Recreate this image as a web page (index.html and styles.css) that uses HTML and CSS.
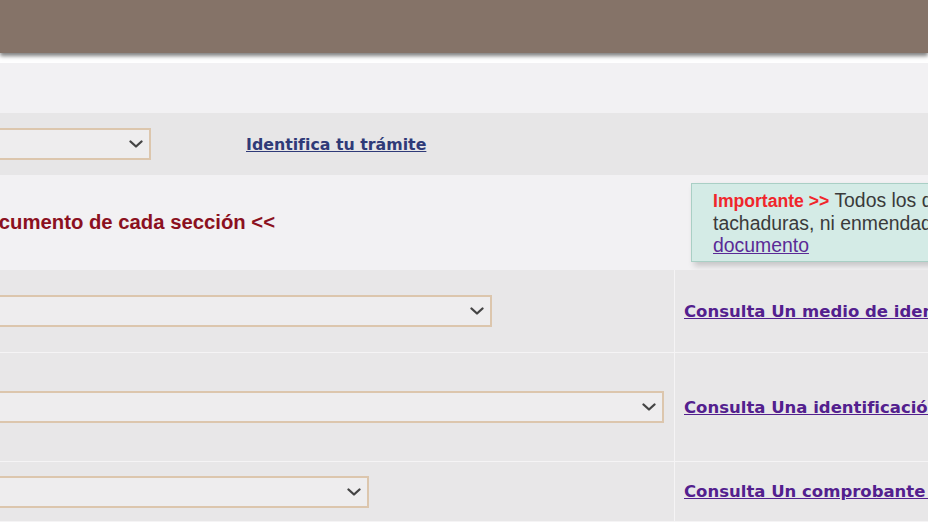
FILE: index.html
```html
<!DOCTYPE html>
<html lang="es">
<head>
<meta charset="utf-8">
<title>Documentos</title>
<link rel="stylesheet" href="styles.css">
</head>
<body>
<header class="topbar"></header>
<div class="strip"></div>
<div class="band"></div>
<div class="row-tramite">
  <span class="selwrap sel-tramite">
    <select class="sel"><option></option></select>
    <svg class="chev" viewBox="0 0 14 8" width="14" height="8"><path d="M1.5 1.5 L7 6.5 L12.5 1.5"/></svg>
  </span>
  <a class="link-tramite" href="#">Identifica tu trámite</a>
</div>
<section class="intro">
  <div class="intro-title"><h2>&gt;&gt; Selecciona un documento de cada sección &lt;&lt;</h2></div>
  <div class="notice">
    <span class="imp">Importante &gt;&gt;</span> Todos los documentos deben ser legibles, sin<br>
    tachaduras, ni enmendaduras. Consulta las características de cada<br>
    <a href="#" class="notice-link">documento</a>
  </div>
</section>
<div class="docs">
  <div class="cell cell-left">
    <span class="selwrap sel-a">
      <select class="sel"><option></option></select>
      <svg class="chev" viewBox="0 0 14 8" width="14" height="8"><path d="M1.5 1.5 L7 6.5 L12.5 1.5"/></svg>
    </span>
  </div>
  <div class="cell cell-right"><a href="#" class="consulta">Consulta Un medio de identificación</a></div>
  <div class="cell cell-left">
    <span class="selwrap sel-b">
      <select class="sel"><option></option></select>
      <svg class="chev" viewBox="0 0 14 8" width="14" height="8"><path d="M1.5 1.5 L7 6.5 L12.5 1.5"/></svg>
    </span>
  </div>
  <div class="cell cell-right"><a href="#" class="consulta">Consulta Una identificación oficial</a></div>
  <div class="cell cell-left">
    <span class="selwrap sel-c">
      <select class="sel"><option></option></select>
      <svg class="chev" viewBox="0 0 14 8" width="14" height="8"><path d="M1.5 1.5 L7 6.5 L12.5 1.5"/></svg>
    </span>
  </div>
  <div class="cell cell-right"><a href="#" class="consulta">Consulta Un comprobante de domicilio</a></div>
  <div class="cell cell-left"></div>
  <div class="cell cell-right"></div>
</div>
</body>
</html>
```
FILE: styles.css
```css
html, body {
  margin: 0;
  padding: 0;
}
body {
  width: 928px;
  height: 522px;
  overflow: hidden;
  background: #f2f1f3;
  font-family: "Liberation Sans", Arial, sans-serif;
}
.topbar {
  position: relative;
  z-index: 2;
  height: 53px;
  background: #857368;
  box-shadow: 0 3px 4px rgba(60, 60, 60, 0.65);
}
.strip {
  height: 10px;
  background: #ffffff;
}
.band {
  height: 50px;
  background: #f2f1f3;
}
.row-tramite {
  height: 62px;
  background: #e7e6e7;
  display: flex;
  align-items: center;
}
.selwrap {
  position: relative;
  display: block;
  flex: 0 0 auto;
  height: 32px;
  margin-left: -40px;
}
.sel {
  display: block;
  width: 100%;
  height: 32px;
  margin: 0;
  border: 2px solid #dcc6ad;
  background-color: #eeedee;
  border-radius: 0;
  box-sizing: border-box;
  appearance: none;
  -webkit-appearance: none;
  color: #333;
  font-size: 14px;
}
.chev {
  position: absolute;
  right: 8px;
  top: 12px;
  pointer-events: none;
}
.chev path {
  fill: none;
  stroke: #444444;
  stroke-width: 2.3;
  stroke-linecap: round;
  stroke-linejoin: round;
}
.sel-tramite { width: 191px; }
.sel-a { width: 532px; }
.sel-b { width: 704px; }
.sel-c { width: 409px; }
.link-tramite {
  margin-left: 95px;
  font-family: "DejaVu Sans", Verdana, sans-serif;
  font-weight: bold;
  font-size: 15.8px;
  color: #2f3a78;
  text-decoration: underline;
}
.intro {
  height: 95px;
  background: #f2f1f3;
  display: flex;
  align-items: center;
}
.intro-title {
  width: 275px;
  flex: 0 0 275px;
  display: flex;
  justify-content: flex-end;
}
.intro-title h2 {
  margin: 0;
  white-space: nowrap;
  font-family: "Liberation Sans", Arial, sans-serif;
  font-weight: bold;
  font-size: 20.3px;
  color: #8b1020;
}
.notice {
  align-self: flex-start;
  margin-top: 8px;
  margin-left: 416px;
  flex: 0 0 auto;
  width: 620px;
  box-sizing: border-box;
  height: 79px;
  padding: 5px 10px 0 21px;
  background: #d4ebe6;
  border: 1px solid #a9cfc5;
  box-shadow: 3px 4px 6px rgba(0, 0, 0, 0.18);
  font-size: 19.4px;
  line-height: 22px;
  color: #3a3a3a;
  white-space: nowrap;
}
.imp {
  color: #f0262b;
  font-weight: bold;
  font-size: 17.6px;
}
.notice-link {
  color: #5a2a96;
  text-decoration: underline;
}
.docs {
  display: grid;
  grid-template-columns: 674px 1fr;
  grid-template-rows: 82px 108px 59px 40px;
  gap: 1px;
  background: #f5f4f5;
}
.cell {
  background: #e8e7e8;
  display: flex;
  align-items: center;
}
.cell-right {
  padding-left: 9px;
  white-space: nowrap;
  overflow: hidden;
}
.consulta {
  font-family: "DejaVu Sans", Verdana, sans-serif;
  font-weight: bold;
  font-size: 16.5px;
  color: #53208e;
  text-decoration: underline;
}
```
